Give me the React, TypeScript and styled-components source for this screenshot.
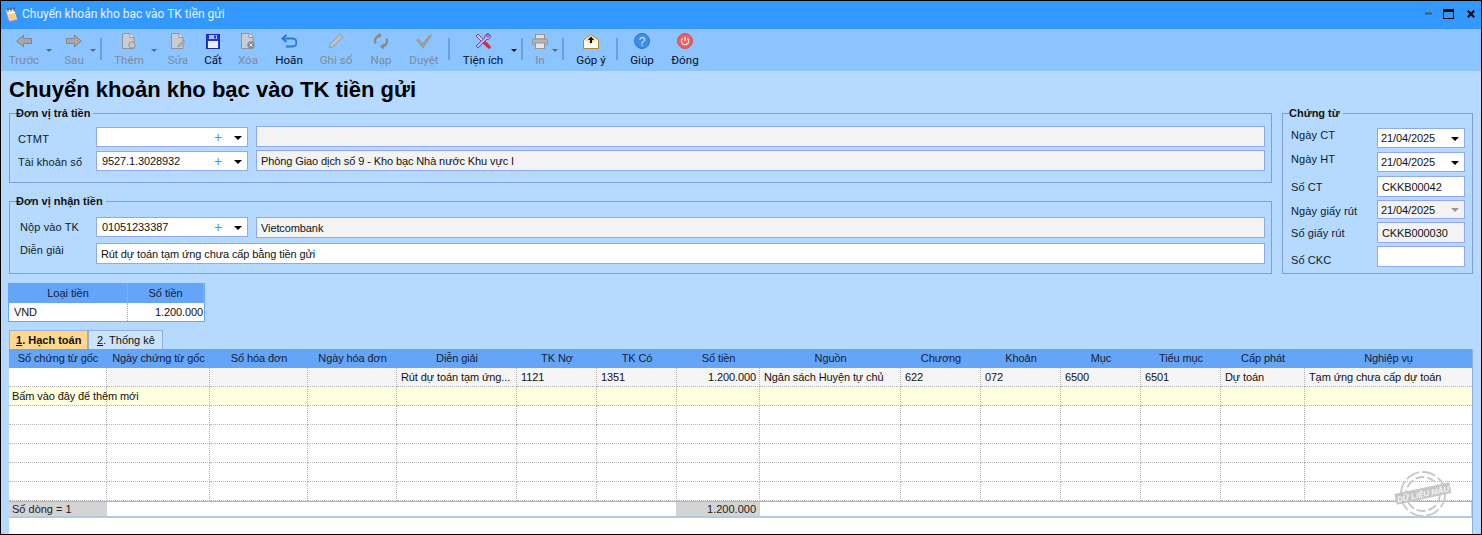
import React from "react";
import styled, { createGlobalStyle } from "styled-components";

const FONT = `"Liberation Sans", Arial, sans-serif`;
const UI_FONT = `Roboto, "Liberation Sans", Arial, sans-serif`;

const Global = createGlobalStyle`
  html, body { margin: 0; padding: 0; width: 1482px; height: 535px; overflow: hidden; background: #b5d9ff; }
  * { box-sizing: border-box; }
  #root { width: 1482px; height: 535px; font: 11px ${FONT}; color: #000; }
`;

const Win = styled.div`
  position: relative; width: 1482px; height: 535px; border: 1px solid #000;
  background: #b5d9ff; display: flex; flex-direction: column; overflow: hidden;
`;
const TitleBar = styled.div`
  height: 28px; flex: none; background: #3399ff; display: flex; align-items: center; padding: 0 6px 0 3px; color: #e8f3ff; font: 12px ${UI_FONT};
`;
const TitleText = styled.span`margin-left: 2px; flex: 1; position: relative; top: -1px;`;
const WinBtns = styled.div`display: flex; align-items: center; margin-top: -3px;`;
const WinGlyph = styled.svg<{ $ml?: number }>`flex: none; margin-left: ${p => p.$ml ?? 0}px;`;
const Toolbar = styled.div`
  height: 42px; flex: none; background: #8cc4ff; display: flex; align-items: flex-start; padding-left: 5px; font: 11.6px ${UI_FONT};
`;
const Tool = styled.div<{ $w: number; $ml: number; $off?: boolean }>`
  flex: none; width: ${p => p.$w}px; margin-left: ${p => p.$ml}px; height: 42px; display: flex; flex-direction: column; align-items: center;
  padding-top: 4px; color: ${p => (p.$off ? "#7e8c9b" : "#04102a")}; white-space: nowrap;
`;
const ToolIcon = styled.div`height: 16px; width: 24px; display: flex; align-items: center; justify-content: center;`;
const ToolLabel = styled.span`margin-top: 4px; line-height: 14px;`;
const Caret = styled.div<{ $ml: number; $off?: boolean }>`
  flex: none; height: 0; width: 6px; margin: 20px 0 0 ${p => p.$ml}px; border: 3px solid transparent; border-top: 3px solid ${p => (p.$off ? "#5f6b78" : "#111")}; border-bottom: 0;
`;
const Sep = styled.div<{ $ml: number }>`flex: none; width: 2px; height: 22px; margin: 9px 0 0 ${p => p.$ml}px; background: #6f9fd6;`;

const Main = styled.div`flex: 1; min-height: 0; display: flex; flex-direction: column; padding: 0 0 0 8px;`;
const Heading = styled.h1`margin: 5px 0 0 0; font: bold 22px/27px ${FONT}; color: #000; height: 30px;`;
const Top = styled.div`display: grid; grid-template-columns: 1263px 191px; column-gap: 10px;`;
const Col = styled.div`display: flex; flex-direction: column; gap: 11px;`;
const Group = styled.fieldset<{ $h: number; $pt?: number }>`
  margin: 0; padding: ${p => p.$pt ?? 6}px 6px 0 7px; min-width: 0; height: ${p => p.$h}px; border: 1px solid #7f9ed8;
`;
const Legend = styled.legend`
  margin-left: -1px; padding: 0 3px 0 0; font-weight: bold; font-size: 11px; line-height: 14px; color: #111;
`;
const FormRow = styled.div<{ $mt?: number; $h: number }>`
  display: flex; align-items: flex-start; height: ${p => p.$h}px; margin-top: ${p => p.$mt ?? 0}px;
`;
const Label = styled.span<{ $w: number; $pad?: number; $dy?: number }>`
  flex: none; width: ${p => p.$w}px; padding-left: ${p => p.$pad ?? 0}px; margin-top: ${p => p.$dy ?? 0}px; line-height: 14px; color: #0c1c2a; letter-spacing: .1px;
`;
const Field = styled.div<{ $w?: number; $off?: boolean; $h?: number; $dy?: number; $ml?: number; $pl?: number }>`
  ${p => (p.$w ? `width:${p.$w}px; flex:none;` : "flex:1;")}
  height: ${p => p.$h ?? 21}px; margin-top: ${p => p.$dy ?? 0}px; margin-left: ${p => p.$ml ?? 0}px;
  border: 1px solid #8fa9ea; background: ${p => (p.$off ? "#f3f3f3" : "#fff")};
  display: flex; align-items: center; padding-left: ${p => p.$pl ?? 4}px; color: #121212; white-space: nowrap; overflow: hidden; letter-spacing: -.1px;
`;
const FieldText = styled.span`flex: 1;`;
const Plus = styled.span`color: #3f9ae8; font-size: 14px; line-height: 14px; width: 16px; text-align: center;`;
const Down = styled.i<{ $off?: boolean }>`
  flex: none; display: block; width: 0; height: 0; margin: 1px 5px 0 8px; border-left: 4px solid transparent; border-right: 4px solid transparent;
  border-top: 4px solid ${p => (p.$off ? "#999" : "#000")};
`;

const RightRow = styled.div<{ $h: number }>`display: flex; height: ${p => p.$h}px; align-items: flex-start;`;

const Small = styled.div`
  margin: 9px 0 0 -1px; width: 197px; height: 39px; display: grid; grid-template-columns: 119px 1fr; background: #fff;
  border: 1px solid #6aa6f7; border-top: 0;
`;
const SmallHead = styled.div`background: #64a5f8; height: 20px; display: flex; align-items: center; justify-content: center; color: #13203a; border-right: 1px solid #7fb1f0;`;
const SmallCell = styled.div<{ $r?: boolean }>`
  height: 18px; line-height: 18px; padding: 0 1px 0 5px; text-align: ${p => (p.$r ? "right" : "left")}; color: #111; letter-spacing: -.1px;
  ${p => (p.$r ? "" : "border-right: 1px dotted #b4b4b4;")}
`;

const Tabs = styled.div`display: flex; margin: 8px 0 0 0; height: 19px; align-items: flex-end;`;
const Tab = styled.div<{ $on?: boolean }>`
  height: 19px; padding: 0 ${p => (p.$on ? 6 : 8)}px; display: flex; align-items: center; border: 1px solid #8fb1e2; border-bottom: 0;
  background: ${p => (p.$on ? "#ffd88c" : "#cbe4fc")}; font-weight: ${p => (p.$on ? "bold" : "normal")}; color: #111;
  width: ${p => (p.$on ? 79 : 75)}px; white-space: nowrap;
  u { text-decoration: underline; }
`;

const COLS = "98px 103px 98px 89px 120px 80px 80px 83px 141px 80px 80px 80px 80px 84px 1fr";
const GridBox = styled.div`
  width: 1464px; flex: 1; min-height: 0; background: #fff; display: flex; flex-direction: column; border-right: 1px solid #8fb1e2;
`;
const GridRow = styled.div<{ $bg?: string; $h?: number }>`
  display: grid; grid-template-columns: ${COLS}; height: ${p => p.$h ?? 19}px; flex: none; background: ${p => p.$bg ?? "#fff"};
`;
const HeadRow = styled(GridRow)`background: #64a5f8;`;
const HeadCell = styled.div`text-align: center; line-height: 19px; color: #13203a; white-space: nowrap; overflow: hidden; letter-spacing: -.1px;`;
const Cell = styled.div<{ $r?: boolean; $bg?: string; $over?: boolean }>`
  border-right: 1px dotted #b4b4b4; border-bottom: 1px dotted #b4b4b4; line-height: 18px; padding: 0 3px 0 ${p => (p.$over ? 3 : 4)}px; white-space: nowrap;
  overflow: ${p => (p.$over ? "visible" : "hidden")}; color: #111; letter-spacing: -.1px;
  text-align: ${p => (p.$r ? "right" : "left")};
  ${p => (p.$bg ? `background: ${p.$bg};` : "")}
  &:last-child { border-right: 0; }
`;
const Footer = styled(GridRow)`border-top: 1px solid #b4b4b4; border-bottom: 2px solid #b7c9dd; height: 17px;`;
const FootCell = styled.div<{ $grey?: boolean; $r?: boolean; $span?: number }>`
  ${p => (p.$span ? `grid-column: span ${p.$span};` : "")}
  background: ${p => (p.$grey ? "#d4d4d4" : "#fff")}; line-height: 14px; padding: 0 3px; text-align: ${p => (p.$r ? "right" : "left")}; color: #222;
  border-right: 1px solid #c4d4e6;
`;
const Stamp = styled.svg`position: absolute; left: 1391px; top: 467px; width: 62px; height: 52px;`;

const LeftArrow = () => (<svg width="16" height="14" viewBox="0 0 16 14"><path d="M.7 7 7.500 1v3.500h8v5h-8V13z" fill="#a6a6a6" stroke="#858585" /></svg>);
const RightArrow = () => (<svg width="16" height="14" viewBox="0 0 16 14"><path d="M15.300 7 8.500 1v3.500h-8v5h8V13z" fill="#a6a6a6" stroke="#858585" /></svg>);
const Doc = ({ children }: { children?: React.ReactNode }) => (
  <svg width="14" height="16" viewBox="0 0 14 16">
    <path d="M.5.5h7.500l4 4v11h-11.500z" fill="#c9cdd2" stroke="#8f9499" />
    <path d="M8 .5v4h4" fill="#eceff2" stroke="#8f9499" />
    {children}
  </svg>
);
const Save = () => (
  <svg width="14" height="15" viewBox="0 0 14 15">
    <rect x=".5" y=".5" width="13" height="14" fill="#2236d6" stroke="#1c2ab0" />
    <rect x="3" y="1" width="8" height="4" fill="#a9c4f2" />
    <rect x="8" y="1.500" width="2" height="3" fill="#2236d6" />
    <rect x="2" y="7" width="10" height="7" fill="#e9eefb" />
  </svg>
);
const Undo = () => (
  <svg width="16" height="14" viewBox="0 0 16 14" fill="none">
    <path d="M1.500 4.500h10a3.700 3.700 0 0 1 0 8H5" stroke="#2878d8" strokeWidth="2" />
    <path d="M5.500 1 1.500 4.500 5.500 8" stroke="#2878d8" strokeWidth="2" />
  </svg>
);
const Pencil = () => (<svg width="16" height="16" viewBox="0 0 16 16"><path d="M12 1l3 3L5 14l-4 1 1-4z" fill="#bdbdbd" stroke="#9c9c9c" /></svg>);
const Reload = () => (
  <svg width="16" height="16" viewBox="0 0 16 16" fill="none" stroke="#8b8b8b" strokeWidth="2.400">
    <path d="M2.500 10.500A6 6 0 0 1 6 2.400" /><path d="M13.500 5.500A6 6 0 0 1 10 13.600" />
    <path d="M5.500 0v5l3.500-2.500zM10.500 16v-5L7 13.500z" fill="#8b8b8b" strokeWidth=".6" />
  </svg>
);
const Check = () => (<svg width="16" height="15" viewBox="0 0 16 15"><path d="M0 6l2.500-1.500L6.500 9 14 0l2 1.500L7 15z" fill="#9c9c9c" /></svg>);
const Tools = () => (
  <svg width="16" height="16" viewBox="0 0 16 16" fill="none">
    <path d="M1 3l2-2 5 5 6 6-2 2-6-6z" fill="#d8c8f4" stroke="#5e3f9e" strokeWidth=".9" />
    <path d="M14.500 1.300a3.300 3.300 0 0 0-4.800 3.700L1 13l2 2 8.500-8.500a3.300 3.300 0 0 0 3.700-4.500l-2 2-1.700-.7.200-1.800z" fill="#cbb7ee" stroke="#5e3f9e" strokeWidth=".9" />
    <path d="M10 10l4.200 4.200" stroke="#d62f3e" strokeWidth="3.200" strokeLinecap="round" />
  </svg>
);
const Printer = () => (
  <svg width="16" height="15" viewBox="0 0 16 15">
    <rect x="3.500" y=".5" width="9" height="4.500" fill="#e2e2e2" stroke="#969696" />
    <rect x=".5" y="5" width="15" height="6" rx="1" fill="#b4b4b4" stroke="#969696" />
    <rect x="3.500" y="9" width="9" height="5.500" fill="#e6e6e6" stroke="#969696" />
  </svg>
);
const Mail = () => (
  <svg width="16" height="15" viewBox="0 0 16 15">
    <path d="M.5 6 8 .7 15.500 6v8.500H.5z" fill="#fff" stroke="#b08a30" />
    <path d="M1.500 6 8 1.500 14.500 6 8 10z" fill="#fbe39a" />
    <path d="M8 2.500 4.800 6H7v3h2V6h2.200z" fill="#111" />
  </svg>
);
const Help = () => (
  <svg width="16" height="16" viewBox="0 0 16 16">
    <circle cx="8" cy="8" r="7.500" fill="#3f8ee6" stroke="#2e74c8" />
    <text x="8" y="12.500" textAnchor="middle" fontSize="12" fill="#cfe3ff" fontFamily="Liberation Sans">?</text>
  </svg>
);
const Power = () => (
  <svg width="16" height="16" viewBox="0 0 16 16" fill="none">
    <circle cx="8" cy="8" r="7.500" fill="#ee6060" stroke="#d0505c" />
    <path d="M5.500 5.500a3.600 3.600 0 1 0 5 0M8 3.700V8" stroke="#fff" strokeWidth="1.100" />
  </svg>
);

type Item =
  | { t: "tool"; w: number; ml: number; label: string; off?: boolean; icon: React.ReactNode }
  | { t: "caret"; ml: number; off?: boolean }
  | { t: "sep"; ml: number };

const items: Item[] = [
  { t: "tool", w: 36, ml: 0, label: "Trước", off: true, icon: <LeftArrow /> },
  { t: "caret", ml: 4, off: true },
  { t: "tool", w: 36, ml: 4, label: "Sau", off: true, icon: <RightArrow /> },
  { t: "caret", ml: -2, off: true },
  { t: "sep", ml: 4 },
  { t: "tool", w: 40, ml: 7, label: "Thêm", off: true, icon: <Doc><circle cx="10" cy="12" r="3.200" fill="#c4c9cd" stroke="#8f9499" /></Doc> },
  { t: "caret", ml: 2, off: true },
  { t: "tool", w: 30, ml: 6, label: "Sửa", off: true, icon: <Doc><path d="M12.500 7l1.500 1.500-5 5-2 .5.5-2z" fill="#b0b0b0" stroke="#8f9499" strokeWidth=".7" /></Doc> },
  { t: "tool", w: 30, ml: 5, label: "Cất", icon: <Save /> },
  { t: "tool", w: 30, ml: 5, label: "Xóa", off: true, icon: <Doc><circle cx="10" cy="12" r="3.700" fill="#858d94" /><path d="M8.500 10.500l3 3m0-3l-3 3" stroke="#e8e8e8" /></Doc> },
  { t: "tool", w: 36, ml: 8, label: "Hoãn", icon: <Undo /> },
  { t: "tool", w: 40, ml: 9, label: "Ghi sổ", off: true, icon: <Pencil /> },
  { t: "tool", w: 30, ml: 10, label: "Nạp", off: true, icon: <Reload /> },
  { t: "tool", w: 40, ml: 8, label: "Duyệt", off: true, icon: <Check /> },
  { t: "sep", ml: 4 },
  { t: "tool", w: 50, ml: 8, label: "Tiện ích", icon: <Tools /> },
  { t: "caret", ml: 3 },
  { t: "sep", ml: 4 },
  { t: "tool", w: 20, ml: 7, label: "In", off: true, icon: <Printer /> },
  { t: "caret", ml: 2, off: true },
  { t: "sep", ml: 4 },
  { t: "tool", w: 40, ml: 7, label: "Góp ý", icon: <Mail /> },
  { t: "sep", ml: 5 },
  { t: "tool", w: 30, ml: 9, label: "Giúp", icon: <Help /> },
  { t: "tool", w: 36, ml: 10, label: "Đóng", icon: <Power /> },
];

const heads = ["Số chứng từ gốc", "Ngày chứng từ gốc", "Số hóa đơn", "Ngày hóa đơn", "Diễn giải", "TK Nợ", "TK Có", "Số tiền", "Nguồn", "Chương", "Khoản", "Mục", "Tiểu mục", "Cấp phát", "Nghiệp vụ"];
const row1 = ["", "", "", "", "Rút dự toán tạm ứng...", "1121", "1351", "1.200.000", "Ngân sách Huyện tự chủ", "622", "072", "6500", "6501", "Dự toán", "Tạm ứng chưa cấp dự toán"];
const blank = heads.map(() => "");

const Combo = ({ v, dy = 1 }: { v: string; dy?: number }) => (
  <Field $w={152} $h={20} $dy={dy} $pl={5}>
    <FieldText>{v}</FieldText><Plus>+</Plus><Down />
  </Field>
);
const DateBox = ({ off }: { off?: boolean }) => (
  <Field $w={88} $h={off ? 19 : 20} $off={off} $pl={3}>
    <FieldText>21/04/2025</FieldText><Down $off={off} />
  </Field>
);

export default function App() {
  return (
    <Win>
      <Global />
      <TitleBar>
        <svg width="16" height="16" viewBox="0 0 16 16">
          <path d="M1 3l9-1 4 11-9 2z" fill="#c8b4ea" stroke="#8a78c0" strokeWidth=".8" />
          <path d="M2.500 3.500 10 2.500l2.500 9-7 1.500z" fill="#fff" />
          <path d="M4 7l7-1 1.300 5.500-6.800 1.500z" fill="#f5d36a" />
          <path d="M4 1v4M7 .6v4M10 .4v4" stroke="#444" strokeWidth="1" />
        </svg>
        <TitleText>Chuyển khoản kho bạc vào TK tiền gửi</TitleText>
        <WinBtns>
          <WinGlyph width="7" height="3" viewBox="0 0 7 3"><rect width="7" height="2" y=".5" fill="#555" /></WinGlyph>
          <WinGlyph $ml={11} width="11" height="10" viewBox="0 0 11 10" fill="none"><rect x=".5" y=".5" width="10" height="9" stroke="#000" /><rect x="0" y="0" width="11" height="3" fill="#000" /></WinGlyph>
          <WinGlyph $ml={13} width="8" height="8" viewBox="0 0 8 8"><path d="M.8.8l6.400 6.400M7.200.8.800 7.200" stroke="#000" strokeWidth="2" /></WinGlyph>
        </WinBtns>
      </TitleBar>
      <Toolbar>
        {items.map((it, i) => {
          if (it.t === "caret") return <Caret key={i} $ml={it.ml} $off={it.off} />;
          if (it.t === "sep") return <Sep key={i} $ml={it.ml} />;
          return (
            <Tool key={i} $w={it.w} $ml={it.ml} $off={it.off}>
              <ToolIcon>{it.icon}</ToolIcon>
              <ToolLabel>{it.label}</ToolLabel>
            </Tool>
          );
        })}
      </Toolbar>
      <Main>
        <Heading>Chuyển khoản kho bạc vào TK tiền gửi</Heading>
        <Top>
          <Col>
            <Group $h={77}>
              <Legend>Đơn vị trả tiền</Legend>
              <FormRow $h={24}>
                <Label $w={79} $pad={1} $dy={6}>CTMT</Label>
                <Combo v="" />
                <Field $off $ml={8} />
              </FormRow>
              <FormRow $h={24}>
                <Label $w={79} $pad={1} $dy={5}>Tài khoản số</Label>
                <Combo v="9527.1.3028932" />
                <Field $off $ml={8}>Phòng Giao dịch số 9 - Kho bạc Nhà nước Khu vực I</Field>
              </FormRow>
            </Group>
            <Group $h={80}>
              <Legend>Đơn vị nhận tiền</Legend>
              <FormRow $h={26} $mt={3}>
                <Label $w={79} $pad={3} $dy={3}>Nộp vào TK</Label>
                <Combo v="01051233387" dy={0} />
                <Field $off $ml={8}>Vietcombank</Field>
              </FormRow>
              <FormRow $h={24}>
                <Label $w={79} $pad={3}>Diễn giải</Label>
                <Field>Rút dự toán tạm ứng chưa cấp bằng tiền gửi</Field>
              </FormRow>
            </Group>
          </Col>
          <Group $h={168} $pt={8}>
            <Legend>Chứng từ</Legend>
            <RightRow $h={24}><Label $w={87} $pad={1}>Ngày CT</Label><DateBox /></RightRow>
            <RightRow $h={24}><Label $w={87} $pad={1}>Ngày HT</Label><DateBox /></RightRow>
            <RightRow $h={24}><Label $w={87} $pad={1} $dy={4}>Số CT</Label><Field $w={88}>CKKB00042</Field></RightRow>
            <RightRow $h={22}><Label $w={87} $pad={1} $dy={4}>Ngày giấy rút</Label><DateBox off /></RightRow>
            <RightRow $h={24}><Label $w={87} $pad={1} $dy={4}>Số giấy rút</Label><Field $w={88} $off>CKKB000030</Field></RightRow>
            <RightRow $h={22}><Label $w={87} $pad={1} $dy={7}>Số CKC</Label><Field $w={88}></Field></RightRow>
          </Group>
        </Top>
        <Small>
          <SmallHead>Loại tiền</SmallHead><SmallHead>Số tiền</SmallHead>
          <SmallCell>VND</SmallCell><SmallCell $r>1.200.000</SmallCell>
        </Small>
        <Tabs>
          <Tab $on><u>1</u>. Hạch toán</Tab>
          <Tab><u>2</u>. Thống kê</Tab>
        </Tabs>
        <GridBox>
          <HeadRow>{heads.map(h => <HeadCell key={h}>{h}</HeadCell>)}</HeadRow>
          <GridRow $bg="#f5f5f5">{row1.map((c, i) => <Cell key={i} $r={i === 7} $bg={i === 0 ? "#fff" : undefined}>{c}</Cell>)}</GridRow>
          <GridRow $bg="#ffffe0">{blank.map((_, i) => <Cell key={i} $over={i === 0}>{i === 0 ? "Bấm vào đây để thêm mới" : ""}</Cell>)}</GridRow>
          {[0, 1, 2, 3, 4].map(r => (
            <GridRow key={r}>{blank.map((_, i) => <Cell key={i} />)}</GridRow>
          ))}
          <Footer>
            <FootCell $grey>Số dòng = 1</FootCell>
            <FootCell $span={6} />
            <FootCell $grey $r>1.200.000</FootCell>
            <FootCell $span={7} />
          </Footer>
        </GridBox>
      </Main>
      <Stamp viewBox="0 0 62 52" fill="none">
        <g stroke="#c6c6c6" strokeWidth="1.800">
          <circle cx="31" cy="26" r="22" strokeDasharray="14 3" />
          <circle cx="31" cy="26" r="17" strokeDasharray="9 3" />
        </g>
        <g transform="rotate(-12 31 26)">
          <rect x="3" y="20" width="56" height="11" fill="#c6c6c6" />
          <text x="31" y="29" textAnchor="middle" fontSize="8" fontWeight="bold" fontStyle="italic" fontFamily="Liberation Sans" fill="#f4f4f4">DỮ LIỆU MẪU</text>
        </g>
      </Stamp>
    </Win>
  );
}
